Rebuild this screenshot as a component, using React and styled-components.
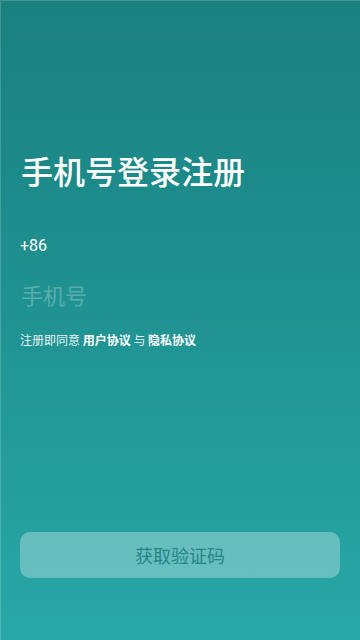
import React from 'react'
import styled, { createGlobalStyle } from 'styled-components'

const GlobalStyle = createGlobalStyle`
  html, body {
    margin: 0;
    padding: 0;
  }
  body {
    font-family: "Noto Sans CJK SC", "Noto Sans", Roboto, sans-serif;
  }
  * {
    box-sizing: border-box;
  }
`

const Screen = styled.div`
  display: flex;
  flex-direction: column;
  min-height: 100vh;
  padding: 151px 20px 62px;
  background: linear-gradient(180deg, #1a7f7f 0%, #1f9191 45%, #28a8a7 100%);
  box-shadow: inset 1px 1px 0 rgba(255, 255, 255, 0.18);
  color: #fff;
`

const Title = styled.h1`
  margin: 0 0 0 1px;
  font-size: 32px;
  line-height: 38px;
  font-weight: 500;
  letter-spacing: 0;
`

const AreaCode = styled.div`
  margin-top: 47px;
  font-family: Roboto, "Noto Sans CJK SC", sans-serif;
  font-size: 16px;
  line-height: 20px;
`

const PhoneInput = styled.input`
  margin-top: 23px;
  padding: 0 0 0 1px;
  border: 0;
  outline: none;
  background: transparent;
  width: 100%;
  height: 30px;
  font-family: "Noto Sans CJK SC", sans-serif;
  font-size: 22px;
  color: #fff;

  &::placeholder {
    color: rgba(255, 255, 255, 0.27);
  }
`

const Agreement = styled.p`
  margin: 23px 0 0;
  font-size: 12px;
  line-height: 16px;
  color: rgba(255, 255, 255, 0.92);
`

const Link = styled.span`
  font-weight: 700;
  color: #fff;
`

const SubmitButton = styled.button`
  margin-top: auto;
  height: 46px;
  width: 100%;
  border: 0;
  border-radius: 10px;
  background: rgba(255, 255, 255, 0.3);
  font-family: "Noto Sans CJK SC", sans-serif;
  font-size: 18px;
  color: #268585;
  cursor: pointer;
`

export default function App () {
  return (
    <>
      <GlobalStyle />
      <Screen>
        <Title>手机号登录注册</Title>
        <AreaCode>+86</AreaCode>
        <PhoneInput type='tel' placeholder='手机号' />
        <Agreement>
          注册即同意 <Link>用户协议</Link> 与 <Link>隐私协议</Link>
        </Agreement>
        <SubmitButton disabled>获取验证码</SubmitButton>
      </Screen>
    </>
  )
}
